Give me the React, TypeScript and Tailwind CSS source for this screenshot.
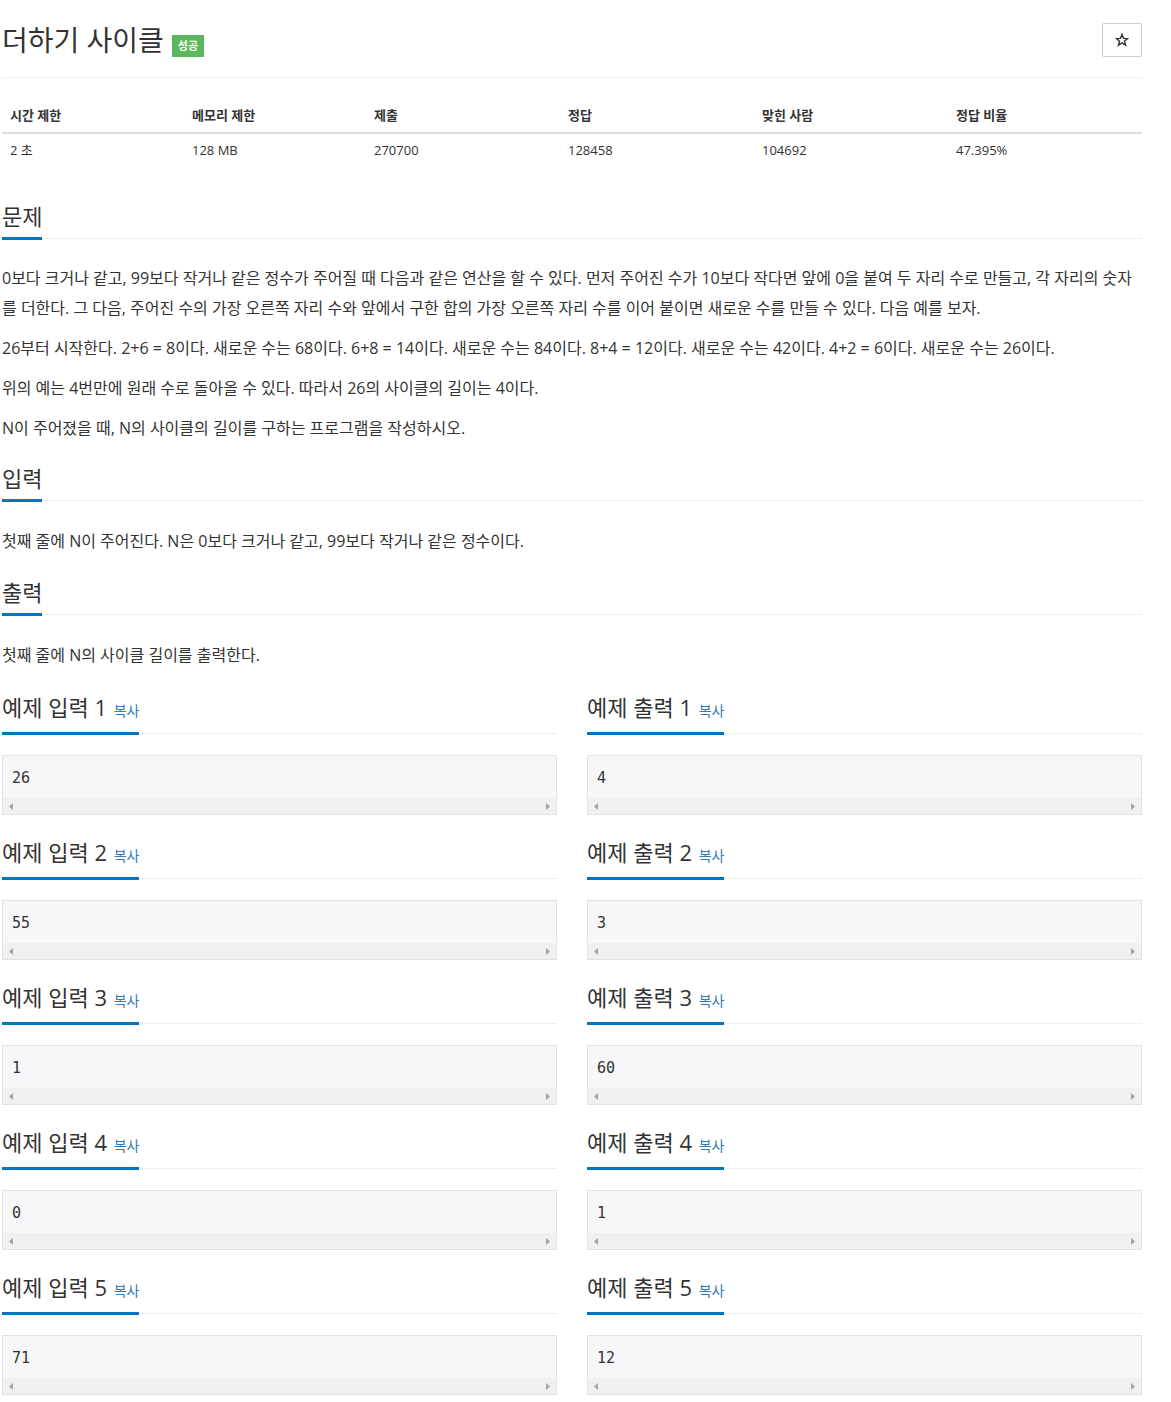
import React from 'react';

const FONT = "font-['Open_Sans','Noto_Sans_CJK_KR',sans-serif]";

const stats = [
    { label: '시간 제한', value: '2 초', w: 'w-[182px]' },
    { label: '메모리 제한', value: '128 MB', w: 'w-[182px]' },
    { label: '제출', value: '270700', w: 'w-[194px]' },
    { label: '정답', value: '128458', w: 'w-[194px]' },
    { label: '맞힌 사람', value: '104692', w: 'w-[194px]' },
    { label: '정답 비율', value: '47.395%', w: 'w-[194px]' },
];

const samples = [
    ['26', '4'],
    ['55', '3'],
    ['1', '60'],
    ['0', '1'],
    ['71', '12'],
];

const Headline = ({ children }: { children: React.ReactNode }) => (
    <div className="border-b border-dotted border-[#dddddd]">
        <h2 className="inline-block border-b-[3px] border-[#0076c0] pb-[9px] -mb-[2px] text-[22px] leading-[24px] font-normal text-[#333]">
            {children}
        </h2>
    </div>
);

const Arrow = ({ dir }: { dir: 'left' | 'right' }) => (
    <svg width="4" height="7" viewBox="0 0 4 7" className="fill-[#a3a3a3]">
        {dir === 'left' ? <path d="M4 0 L0 3.5 L4 7 Z" /> : <path d="M0 0 L4 3.5 L0 7 Z" />}
    </svg>
);

const SampleBox = ({ value }: { value: string }) => (
    <div className="mt-[21px] border border-[#e1e1e8] bg-[#f7f7f9]">
        <pre className="px-[9px] pt-[11px] pb-[9px] font-['DejaVu_Sans_Mono',monospace] text-[15px] leading-[22px] text-[#333]">
            {value}
        </pre>
        <div className="h-[16px] bg-[#f0f0f0] flex items-center justify-between px-[6px]">
            <Arrow dir="left" />
            <Arrow dir="right" />
        </div>
    </div>
);

const Sample = ({ title, n, value }: { title: string; n: number; value: string }) => (
    <div className="mt-[25px]">
        <Headline>
            {title} {n}{' '}
            <a className="ml-[1px] text-[14px] text-[#337ab7] align-baseline">복사</a>
        </Headline>
        <SampleBox value={value} />
    </div>
);

export default function App() {
    return (
        <div className={`${FONT} lining-nums bg-white text-[#333] min-h-[1402px]`}>
            <div className="ml-[2px] w-[1140px] pb-[10px]">
                {/* Title */}
                <div className="pt-[23px] pb-[20px] border-b border-[#eeeeee] flex items-start justify-between">
                    <h1 className="mt-[1px] flex items-end text-[28px] leading-[33px] font-normal text-[#333]">
                        더하기 사이클
                        <span className="ml-[8px] h-[22px] px-[6px] bg-[#5cb85c] text-white text-[11px] font-bold leading-[22px]">
                            성공
                        </span>
                    </h1>
                    <button className="w-[40px] h-[34px] border border-[#cccccc] rounded-[2px] flex items-center justify-center">
                        <svg width="14" height="14" viewBox="0 0 24 24" fill="none" stroke="#333" strokeWidth="2.4" strokeLinejoin="miter">
                            <path d="M12 2.5 L14.6 9.2 L21.7 9.5 L16.2 14 L18.1 21 L12 17 L5.9 21 L7.8 14 L2.3 9.5 L9.4 9.2 Z" />
                        </svg>
                    </button>
                </div>

                {/* Stats table */}
                <table className="mt-[21px] w-full text-[13px] leading-[18px] border-collapse">
                    <thead>
                        <tr className="border-b-2 border-[#dddddd]">
                            {stats.map((s) => (
                                <th key={s.label} className={`${s.w} px-[8px] pt-[7px] pb-[8px] text-left font-bold`}>
                                    {s.label}
                                </th>
                            ))}
                        </tr>
                    </thead>
                    <tbody>
                        <tr>
                            {stats.map((s) => (
                                <td key={s.label} className="px-[8px] pt-[7px] pb-[8px]">
                                    {s.value}
                                </td>
                            ))}
                        </tr>
                    </tbody>
                </table>

                {/* 문제 */}
                <div className="mt-[37px]">
                    <Headline>문제</Headline>
                    <div className="mt-[24px] text-[16px] leading-[30px] flex flex-col gap-[10px]">
                        <p>
                            0보다 크거나 같고, 99보다 작거나 같은 정수가 주어질 때 다음과 같은 연산을 할 수 있다. 먼저 주어진 수가 10보다 작다면 앞에 0을 붙여 두 자리 수로 만들고, 각 자리의 숫자를 더한다. 그 다음, 주어진 수의 가장 오른쪽 자리 수와 앞에서 구한 합의 가장 오른쪽 자리 수를 이어 붙이면 새로운 수를 만들 수 있다. 다음 예를 보자.
                        </p>
                        <p>
                            26부터 시작한다. 2+6 = 8이다. 새로운 수는 68이다. 6+8 = 14이다. 새로운 수는 84이다. 8+4 = 12이다. 새로운 수는 42이다. 4+2 = 6이다. 새로운 수는 26이다.
                        </p>
                        <p>위의 예는 4번만에 원래 수로 돌아올 수 있다. 따라서 26의 사이클의 길이는 4이다.</p>
                        <p>N이 주어졌을 때, N의 사이클의 길이를 구하는 프로그램을 작성하시오.</p>
                    </div>
                </div>

                {/* 입력 */}
                <div className="mt-[23px]">
                    <Headline>입력</Headline>
                    <p className="mt-[25px] text-[16px] leading-[30px]">
                        첫째 줄에 N이 주어진다. N은 0보다 크거나 같고, 99보다 작거나 같은 정수이다.
                    </p>
                </div>

                {/* 출력 */}
                <div className="mt-[24px]">
                    <Headline>출력</Headline>
                    <p className="mt-[25px] text-[16px] leading-[30px]">첫째 줄에 N의 사이클 길이를 출력한다.</p>
                </div>

                {/* Samples */}
                <div className="grid grid-cols-2 gap-x-[30px]">
                    {samples.map(([inp, out], i) => (
                        <React.Fragment key={i}>
                            <Sample title="예제 입력" n={i + 1} value={inp} />
                            <Sample title="예제 출력" n={i + 1} value={out} />
                        </React.Fragment>
                    ))}
                </div>
            </div>
        </div>
    );
}
